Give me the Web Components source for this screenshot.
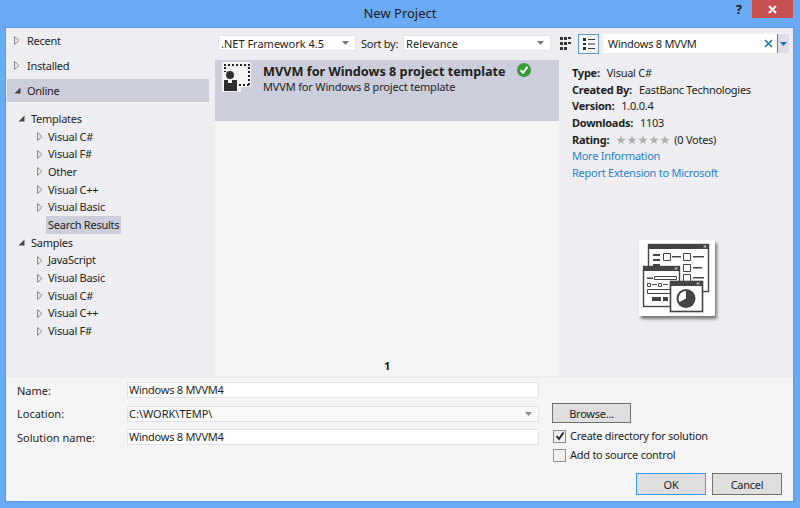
<!doctype html>
<html>
<head>
<meta charset="utf-8">
<title>New Project</title>
<style>
html, body { margin: 0; padding: 0; width: 800px; height: 508px; overflow: hidden; background: #6aaaf5; }
body { font-family: "Noto Sans", sans-serif; font-size: 11px; color: #1e1e1e; }
</style>
</head>
<body>
<vs-dialog>
  <vs-titlebar slot="title">New Project</vs-titlebar>
  <vs-tree slot="left"></vs-tree>
  <vs-results slot="center"></vs-results>
  <vs-details slot="right"></vs-details>
  <vs-form slot="bottom"></vs-form>
</vs-dialog>
<script>
const fontBase = `font-family: "Noto Sans", sans-serif; font-size: 11px; letter-spacing: -.26px;`;

class VsDialog extends HTMLElement {
  connectedCallback() {
    const shadow = this.attachShadow({ mode: "open" });
    shadow.innerHTML = `<style>
:host { display: flex; flex-direction: column; width: 800px; height: 508px; box-sizing: border-box; padding: 0 7px 7px 6px; background: #6aaaf5; }
.client { flex: 1; display: flex; flex-direction: column; background: #f5f5f5; box-shadow: 0 0 0 1px #5b9be6; }
.top { height: 350px; display: flex; background: #eeeef2; }
.left { width: 208px; flex: none; }
.center { width: 344px; flex: none; margin-left: 1px; }
.right { flex: 1; }
</style>
<slot name="title"></slot>
<div class="client">
  <div class="top">
    <div class="left"><slot name="left"></slot></div>
    <div class="center"><slot name="center"></slot></div>
    <div class="right"><slot name="right"></slot></div>
  </div>
  <slot name="bottom"></slot>
</div>`;
  }
}

class VsTitlebar extends HTMLElement {
  connectedCallback() {
    const shadow = this.attachShadow({ mode: "open" });
    shadow.innerHTML = `<style>
:host { display: grid; grid-template-columns: 1fr auto 1fr; height: 28px; margin: 0 -7px 0 -6px; font-family: "Noto Sans", sans-serif; font-size: 13px; color: #1a1a1a; }
.text { padding-top: 4px; line-height: 18px; }
.ctrl { display: flex; justify-content: flex-end; align-items: flex-start; }
.help { font-weight: 700; font-size: 13px; line-height: 18px; margin-right: 10px; }
.close { width: 41px; height: 18px; margin-right: 7px; background: #c75050; display: flex; align-items: center; justify-content: center; }
</style>
<div></div>
<div class="text"><slot></slot></div>
<div class="ctrl"><span class="help">?</span><div class="close"><svg width="9" height="9" viewBox="0 0 9 9"><path d="M1 1L8 8M8 1L1 8" stroke="#fff" stroke-width="2"/></svg></div></div>`;
  }
}

class VsTreeItem extends HTMLElement {
  connectedCallback() {
    const arrow = this.getAttribute("arrow") || "none";
    const shadow = this.attachShadow({ mode: "open" });
    const glyph = arrow === "open"
      ? `<svg width="7" height="7" viewBox="0 0 7 7"><path d="M6.5 .5V6.5H.5Z" fill="#444"/></svg>`
      : arrow === "closed"
      ? `<svg width="6" height="9" viewBox="0 0 6 9"><path d="M.5 .5L5 4.5L.5 8.5Z" fill="#e8e8e8" stroke="#8a8a8a"/></svg>`
      : "";
    shadow.innerHTML = `<style>
:host { display: flex; align-items: center; height: var(--row, 17.7px); padding-left: var(--indent, 0); ${fontBase} color: #1e1e1e; }
.arrow { width: var(--arrow-w, 12px); display: flex; justify-content: center; flex: none; }
.label { margin-left: 2px; padding: 0 2px; line-height: 18px; white-space: nowrap; }
:host([selected]) .label { background: #cccedb; }
</style>
<div class="arrow">${glyph}</div><div class="label"><slot></slot></div>`;
  }
}

class VsTree extends HTMLElement {
  connectedCallback() {
    const shadow = this.attachShadow({ mode: "open" });
    const row = (t, a, cls = "", extra = "") => `<vs-tree-item class="${cls}" arrow="${a}" ${extra}>${t}</vs-tree-item>`;
    const sub = (t) => row(t, "closed", "sub");
    shadow.innerHTML = `<style>
:host { display: block; }
.cat { --row: 25px; --indent: 5px; --arrow-w: 12px; }
.on { --row: 23px; --indent: 4px; background: #cccedb; margin: 1px 5px 1px 1px; }
.tree { padding-top: 7px; }
.head { --indent: 9px; --arrow-w: 12px; }
.sub { --indent: 30px; --arrow-w: 8px; }
</style>
<div>
${row("Recent", "closed", "cat")}
${row("Installed", "closed", "cat")}
${row("Online", "open", "cat on")}
</div>
<div class="tree">
${row("Templates", "open", "head")}
${sub("Visual C#")}${sub("Visual F#")}${sub("Other")}${sub("Visual C++")}${sub("Visual Basic")}
${row("Search Results", "none", "sub", "selected")}
${row("Samples", "open", "head")}
${sub("JavaScript")}${sub("Visual Basic")}${sub("Visual C#")}${sub("Visual C++")}${sub("Visual F#")}
</div>`;
  }
}

class VsCombo extends HTMLElement {
  connectedCallback() {
    const shadow = this.attachShadow({ mode: "open" });
    shadow.innerHTML = `<style>
:host { display: flex; align-items: center; box-sizing: border-box; height: 16px; width: var(--w, 138px); background: #fff; border: 1px solid #e3e3ea; padding: 0 6px 0 2px; ${fontBase} letter-spacing: 0; color: #1e1e1e; }
.t { flex: 1; white-space: nowrap; }
</style>
<div class="t"><slot></slot></div>
<svg width="7" height="4" viewBox="0 0 7 4"><path d="M0 0H7L3.5 4Z" fill="#777"/></svg>`;
  }
}

class VsResults extends HTMLElement {
  connectedCallback() {
    const shadow = this.attachShadow({ mode: "open" });
    shadow.innerHTML = `<style>
:host { display: flex; flex-direction: column; height: 100%; ${fontBase} }
.bar { height: 32px; flex: none; display: flex; align-items: center; padding: 0 0 2px 3px; box-sizing: border-box; }
.sort { white-space: nowrap; margin: 0 5px; }
.list { flex: 1; background: #f5f5f5; margin-bottom: 2px; display: flex; flex-direction: column; }
.item { height: 61px; background: #cccedb; display: flex; flex: none; }
.icon { width: 29px; height: 30px; margin: 2px 0 0 7px; flex: none; }
.text { margin-left: 12px; padding-top: 4px; }
.name { font-weight: 700; font-size: 12.7px; letter-spacing: 0; line-height: 15px; white-space: nowrap; display: flex; gap: 11px; align-items: center; }
.name svg { margin-top: -3px; }
.desc { line-height: 15px; white-space: nowrap; letter-spacing: -.17px; }
.pager { margin-top: auto; text-align: center; font-weight: 700; line-height: 14px; padding-bottom: 3px; color: #111; }
</style>
<div class="bar"><vs-combo style="--w:138px">.NET Framework 4.5</vs-combo><span class="sort">Sort by:</span><vs-combo style="--w:148px">Relevance</vs-combo></div>
<div class="list">
  <div class="item">
    <svg class="icon" viewBox="0 0 29 30">
      <path d="M0 0H29V25H19V30H0Z" fill="#f4f4f6"/>
      <path d="M2 3H28M27 5V24M17 23H27" stroke="#222" stroke-width="2" stroke-dasharray="2 2" fill="none"/>
      <path d="M3 5V10" stroke="#222" stroke-width="2" stroke-dasharray="2 2"/>
      <circle cx="8" cy="13" r="4" fill="#2e2e2e"/>
      <path d="M2 18H6V21H10V18H15V29H2Z" fill="#2e2e2e"/>
    </svg>
    <div class="text">
      <div class="name">MVVM for Windows 8 project template
        <svg width="14" height="14" viewBox="0 0 14 14"><circle cx="7" cy="7" r="7" fill="#399b39"/><path d="M3.6 7.2L6 9.8L10.4 3.8" stroke="#fff" stroke-width="2" fill="none"/></svg>
      </div>
      <div class="desc">MVVM for Windows 8 project template</div>
    </div>
  </div>
  <div class="pager">1</div>
</div>`;
  }
}

class VsDetails extends HTMLElement {
  connectedCallback() {
    const shadow = this.attachShadow({ mode: "open" });
    const star = `<svg width="10" height="10" viewBox="0 0 10 10"><path d="M5 .5L6.2 3.7L9.6 3.8L6.9 5.9L7.9 9.3L5 7.3L2.1 9.3L3.1 5.9L.4 3.8L3.8 3.7Z" fill="#b0b0b0"/></svg>`;
    shadow.innerHTML = `<style>
:host { display: flex; flex-direction: column; height: 100%; ${fontBase} color: #1e1e1e; }
.bar { height: 32px; flex: none; display: flex; align-items: center; padding-bottom: 1px; box-sizing: border-box; }
.view { width: 14px; height: 20px; box-sizing: border-box; display: flex; align-items: center; justify-content: center; }
.view.on { width: 21px; border: 1px solid #5b9bd5; margin-left: 5px; background: #f5f5f5; }
.search { width: 174px; height: 19px; margin-left: 4px; background: #fff; display: flex; align-items: center; padding-left: 5px; box-sizing: border-box; }
.search span { flex: 1; }
.search svg { margin-right: 4px; }
.drop { width: 12px; height: 19px; background: #dcdde6; border-left: 1px solid #3a8ad6; box-sizing: border-box; display: flex; align-items: center; justify-content: center; }
.info { padding: 5px 0 0 13px; line-height: 16.67px; }
.info div { white-space: nowrap; display: flex; align-items: center; }
b { font-weight: 700; margin-right: 7px; }
a { color: #2a7fc9; text-decoration: none; }
.stars { display: inline-flex; gap: 1px; margin-right: 4px; }
.art { margin: 58px 0 0 80px; width: 76px; height: 76px; background: #fff; box-shadow: 2px 3px 3px #777; flex: none; }
</style>
<div class="bar">
  <div class="view"><svg width="13" height="13" viewBox="0 0 13 13"><path d="M0 0h3v3H0zM4 0h3v3H4zM8 0h3v2H8zM0 5h3v3H0zM4 5h3v3H4zM8 5h3v2H8zM0 10h3v3H0zM4 10h3v3H4z" fill="#333"/></svg></div>
  <div class="view on"><svg width="14" height="13" viewBox="0 0 14 13"><path d="M1 1h3v3H1zM6 2h7v1H6zM1 6h3v2H1zM6 6.5h7v1H6zM1 10h3v3H1zM6 11h7v1H6z" fill="#333"/></svg></div>
  <div class="search"><span>Windows 8 MVVM</span><svg width="9" height="9" viewBox="0 0 9 9"><path d="M1 1L8 8M8 1L1 8" stroke="#1e6fba" stroke-width="1.6"/></svg></div>
  <div class="drop"><svg width="7" height="4" viewBox="0 0 7 4"><path d="M0 0H7L3.5 4Z" fill="#1e6fba"/></svg></div>
</div>
<div class="info">
  <div><b>Type:</b>Visual C#</div>
  <div><b>Created By:</b>EastBanc Technologies</div>
  <div><b>Version:</b>1.0.0.4</div>
  <div><b>Downloads:</b>1103</div>
  <div><b>Rating:</b><span class="stars">${star.repeat(5)}</span>(0 Votes)</div>
  <div><a href="#">More Information</a></div>
  <div><a href="#">Report Extension to Microsoft</a></div>
</div>
<svg class="art" viewBox="0 0 76 76">
  <rect x="9.5" y="4.5" width="60" height="47" fill="#fff" stroke="#444" stroke-width="1.4"/>
  <path d="M9 4h61v5H9z" fill="#444"/>
  <path d="M65 5.5l2 2M67 5.5l-2 2" stroke="#fff"/>
  <path d="M14 14h7v2h-7zM14 19h7v2h-7zM14 24h7v2h-7zM33 16h9v1.5h-9zM54 16h11v1.5H54zM54 27h9v1.5h-9zM54 37h11v1.5H54z" fill="#444"/>
  <path d="M24.5 13.5h7v7h-7zM44.500 13.500h7v7h-7zM44.5 24.5h7v7h-7zM44.5 34.5h7v7h-7z" fill="none" stroke="#444"/>
  <rect x="4.5" y="26.5" width="36" height="40" fill="#fff" stroke="#444" stroke-width="1.4"/>
  <path d="M4 26h37v5H4z" fill="#444"/>
  <path d="M36 27.5l2 2M38 27.5l-2 2" stroke="#fff"/>
  <path d="M8 37.5h6v1.5H8zM24 44h5v1H24zM13 44h5v1h-5zM13 57h9v4h-9zM24 57h5v4h-5z" fill="#444"/>
  <path d="M15.5 36.5h22v3h-22zM8.5 43.5h3v3h-3zM19.5 43.5h3v3h-3zM8.5 49.5h29v4h-29z" fill="none" stroke="#444"/>
  <rect x="31.5" y="41.5" width="32" height="30" fill="#fff" stroke="#444" stroke-width="1.6"/>
  <path d="M31 41h33v5H31z" fill="#444"/>
  <path d="M58 42.5l2 2M60 42.5l-2 2" stroke="#fff"/>
  <circle cx="47" cy="58.5" r="9.5" fill="#444"/>
  <path d="M47 51a7.5 7.5 0 0 0-6.500 11L47 58.500Z" fill="#fff"/>
</svg>`;
  }
}

class VsField extends HTMLElement {
  connectedCallback() {
    const shadow = this.attachShadow({ mode: "open" });
    const combo = this.hasAttribute("combo");
    shadow.innerHTML = `<style>
:host { display: flex; align-items: center; height: 16px; ${fontBase} letter-spacing: 0; color: #1e1e1e; }
.l { width: 121px; padding-left: 11px; flex: none; white-space: nowrap; box-sizing: border-box; }
.box { width: 412px; height: 16px; box-sizing: border-box; background: #fff; border: 1px solid #e3e3ea; padding: 0 6px 0 1px; display: flex; align-items: center; line-height: 14px; letter-spacing: -.26px; }
:host([combo]) .box { background: #fafafa; letter-spacing: 0; }
.v { flex: 1; }
</style>
<div class="l">${this.getAttribute("label")}</div>
<div class="box"><div class="v"><slot></slot></div>${combo ? `<svg width="7" height="4" viewBox="0 0 7 4"><path d="M0 0H7L3.5 4Z" fill="#888"/></svg>` : ""}</div>`;
  }
}

class VsButton extends HTMLElement {
  connectedCallback() {
    const shadow = this.attachShadow({ mode: "open" });
    shadow.innerHTML = `<style>
:host { display: flex; align-items: center; justify-content: center; box-sizing: border-box; background: #dedede; border: 1px solid #707070; width: var(--w, 70px); height: var(--h, 22px); ${fontBase} color: #1e1e1e; }
:host([primary]) { border-color: #3399ff; }
</style><slot></slot>`;
  }
}

class VsCheck extends HTMLElement {
  connectedCallback() {
    const shadow = this.attachShadow({ mode: "open" });
    const on = this.hasAttribute("checked");
    shadow.innerHTML = `<style>
:host { display: flex; align-items: center; gap: 4px; height: 18px; margin-left: 1px; ${fontBase} color: #1e1e1e; white-space: nowrap; }
.b { width: 13px; height: 13px; box-sizing: border-box; border: 1px solid #8f8f8f; background: #f0f0f0; display: flex; align-items: center; justify-content: center; }
.t { padding-bottom: 2px; }
</style>
<div class="b">${on ? `<svg width="10" height="10" viewBox="0 0 10 10"><path d="M1.5 5L4 8L8.5 1.5" stroke="#222" stroke-width="1.8" fill="none"/></svg>` : ""}</div><span class="t"><slot></slot></span>`;
  }
}

class VsForm extends HTMLElement {
  connectedCallback() {
    const shadow = this.attachShadow({ mode: "open" });
    shadow.innerHTML = `<style>
:host { display: flex; flex: 1; ${fontBase} }
.fields { display: flex; flex-direction: column; gap: 7.5px; padding-top: 4px; }
.side { margin-left: 13px; padding-top: 25px; display: flex; flex-direction: column; align-items: flex-start; }
.checks { display: flex; flex-direction: column; gap: 1px; margin-top: 4px; }
.actions { display: flex; gap: 6px; margin: 9px 0 0 84px; }
</style>
<div class="fields">
  <vs-field label="Name:">Windows 8 MVVM4</vs-field>
  <vs-field label="Location:" combo>C:\\WORK\\TEMP\\</vs-field>
  <vs-field label="Solution name:">Windows 8 MVVM4</vs-field>
</div>
<div class="side">
  <vs-button style="--w:79px;--h:20px">Browse...</vs-button>
  <div class="checks">
    <vs-check checked>Create directory for solution</vs-check>
    <vs-check>Add to source control</vs-check>
  </div>
  <div class="actions">
    <vs-button primary>OK</vs-button>
    <vs-button>Cancel</vs-button>
  </div>
</div>`;
  }
}

customElements.define("vs-dialog", VsDialog);
customElements.define("vs-titlebar", VsTitlebar);
customElements.define("vs-tree-item", VsTreeItem);
customElements.define("vs-tree", VsTree);
customElements.define("vs-combo", VsCombo);
customElements.define("vs-results", VsResults);
customElements.define("vs-details", VsDetails);
customElements.define("vs-field", VsField);
customElements.define("vs-button", VsButton);
customElements.define("vs-check", VsCheck);
customElements.define("vs-form", VsForm);
</script>
</body>
</html>
